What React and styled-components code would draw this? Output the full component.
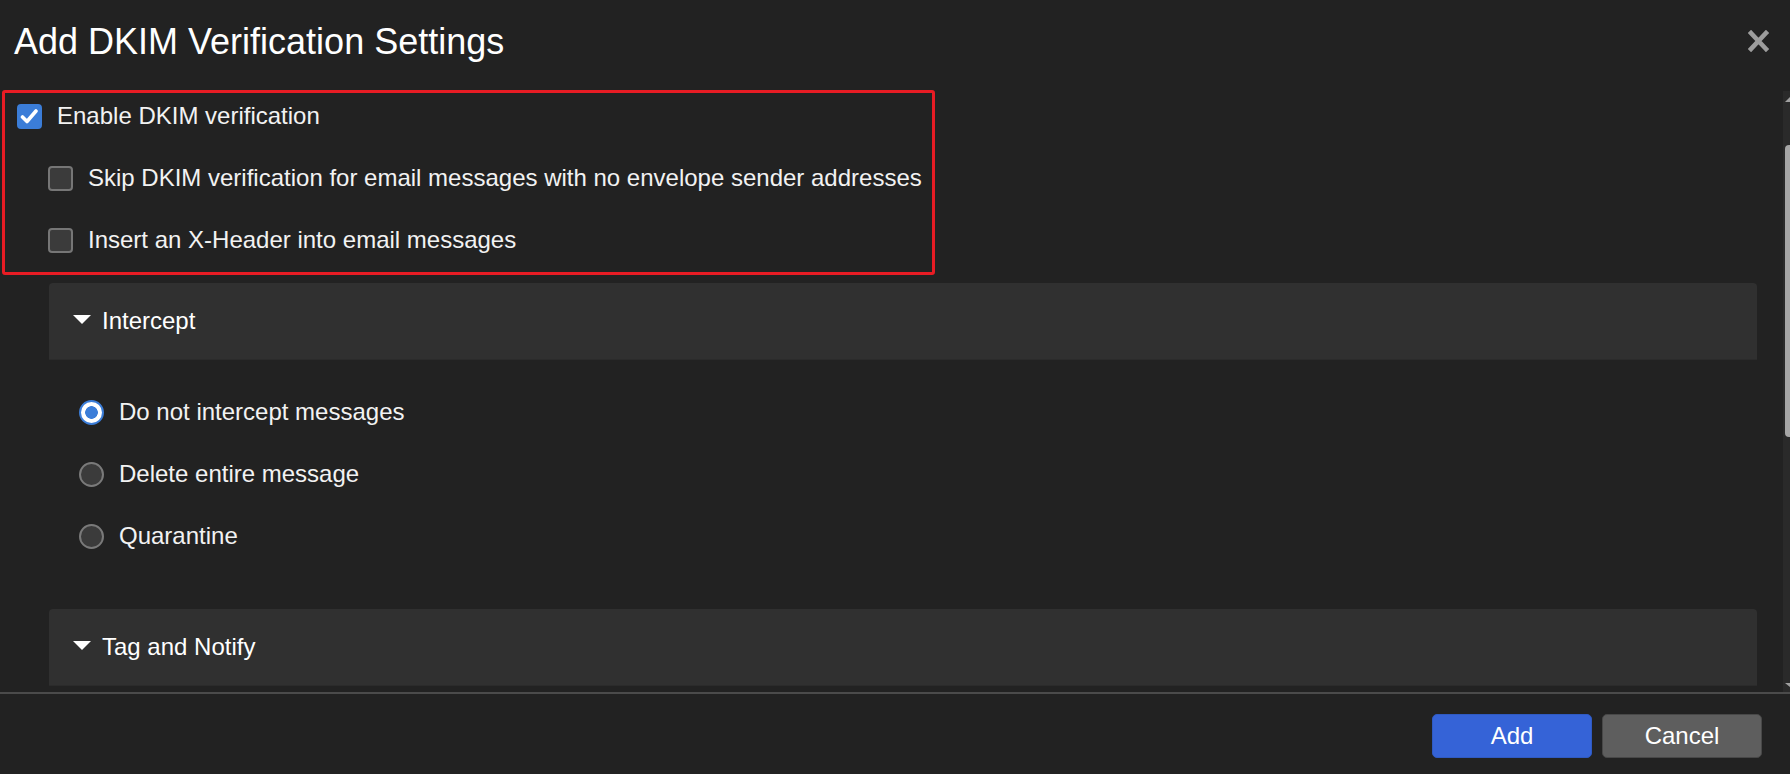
import React from "react";
import styled, { createGlobalStyle } from "styled-components";

const GlobalStyle = createGlobalStyle`
  html, body {
    margin: 0;
    padding: 0;
    background: #222222;
    overflow: hidden;
  }
  * { box-sizing: border-box; }
`;

const Dialog = styled.div`
  width: 1790px;
  height: 774px;
  display: flex;
  flex-direction: column;
  background: #222222;
  color: #f2f2f2;
  font-family: "Liberation Sans", Arial, sans-serif;
  font-size: 24px;
`;

const Header = styled.div`
  height: 90px;
  flex: none;
  display: flex;
  justify-content: space-between;
  align-items: flex-start;
  padding: 0 21px 0 14px;
`;

const Title = styled.h1`
  margin: 22px 0 0;
  font-size: 36px;
  line-height: 40px;
  font-weight: normal;
  color: #ffffff;
`;

const CloseButton = styled.button`
  margin-top: 30px;
  width: 21px;
  height: 22px;
  padding: 0;
  border: none;
  background: none;
  display: flex;
  align-items: center;
  justify-content: center;
  cursor: pointer;
`;

const Body = styled.div`
  height: 602px;
  flex: none;
  display: flex;
`;

const Content = styled.div`
  flex: 1;
  overflow: hidden;
  padding: 0 26px 0 2px;
`;

const Highlight = styled.div`
  width: 933px;
  border: 3px solid #e81c24;
  border-radius: 3px;
  padding: 3px 0 12px;
  display: flex;
  flex-direction: column;
  gap: 22px;
`;

const OptionRow = styled.label`
  height: 40px;
  display: flex;
  align-items: center;
  gap: 15px;
  padding-left: ${(p) => p.$indent}px;
  line-height: 28px;
  white-space: nowrap;
`;

const CheckBox = styled.span`
  width: 25px;
  height: 25px;
  flex: none;
  border-radius: 4px;
  display: flex;
  align-items: center;
  justify-content: center;
  background: ${(p) => (p.$checked ? "#3b7dd8" : "#3b3b3b")};
  border: 2px solid ${(p) => (p.$checked ? "#3b7dd8" : "#767676")};
`;

const Sections = styled.div`
  margin-left: 47px;
  margin-top: 8px;
  display: flex;
  flex-direction: column;
`;

const SectionHeader = styled.div`
  height: 77px;
  display: flex;
  align-items: center;
  gap: 11px;
  padding-left: 24px;
  background: #303030;
  border-radius: 4px 4px 0 0;
  border-bottom: 1px solid #2b2b2b;
  color: #ffffff;
`;

const Caret = styled.span`
  width: 0;
  height: 0;
  border-left: 9px solid transparent;
  border-right: 9px solid transparent;
  border-top: 9px solid #ffffff;
  margin-top: -4px;
`;

const SectionBody = styled.div`
  padding: 32px 0 53px 30px;
  display: flex;
  flex-direction: column;
  gap: 22px;
`;

const Radio = styled.span`
  width: 25px;
  height: 25px;
  flex: none;
  border-radius: 50%;
  border: 2px solid ${(p) => (p.$checked ? "#3b7dd8" : "#7a7a7a")};
  background: ${(p) =>
    p.$checked
      ? "radial-gradient(circle, #3b7dd8 0 6px, #ffffff 6.6px)"
      : "#3b3b3b"};
`;

const ScrollTrack = styled.div`
  width: 7px;
  flex: none;
  background: #2a2a2a;
  overflow: hidden;
  display: flex;
  flex-direction: column;
  padding-left: 2px;
  margin-top: 1px;
`;

const ArrowUp = styled.span`
  width: 0;
  height: 0;
  margin-top: 6px;
  border-left: 5px solid transparent;
  border-right: 5px solid transparent;
  border-bottom: 5px solid #a0a0a0;
`;

const Thumb = styled.span`
  width: 12px;
  height: 292px;
  margin-top: 43px;
  background: #a6a6a6;
  border-radius: 4px;
`;

const ArrowDown = styled.span`
  width: 0;
  height: 0;
  margin-top: auto;
  margin-bottom: 5px;
  border-left: 5px solid transparent;
  border-right: 5px solid transparent;
  border-top: 4px solid #a0a0a0;
`;

const Separator = styled.div`
  height: 2px;
  flex: none;
  background: #4b4b4b;
`;

const Footer = styled.div`
  flex: 1;
  display: flex;
  justify-content: flex-end;
  align-items: flex-start;
  gap: 10px;
  padding: 20px 28px 0 0;
`;

const Button = styled.button`
  width: 160px;
  height: 44px;
  border-radius: 5px;
  font-family: "Liberation Sans", Arial, sans-serif;
  font-size: 24px;
  color: #ffffff;
  cursor: pointer;
  background: ${(p) => (p.$primary ? "#3563d7" : "#5e5e5e")};
  border: 1px solid ${(p) => (p.$primary ? "#2f5ac2" : "#484848")};
`;

const Check = () => (
  <svg width="19" height="17" viewBox="0 0 19 17">
    <path d="M2.5 9 L7 13.5 L16 3" fill="none" stroke="#fff" strokeWidth="3.6" strokeLinecap="round" strokeLinejoin="round" />
  </svg>
);

const CloseIcon = () => (
  <svg width="21" height="22" viewBox="0 0 21 22">
    <path d="M3 3 L18 19 M18 3 L3 19" stroke="#9d9d9d" strokeWidth="4.6" strokeLinecap="square" />
  </svg>
);

const Section = ({ title, options }) => (
  <div>
    <SectionHeader>
      <Caret />
      <span>{title}</span>
    </SectionHeader>
    {options.length > 0 && (
      <SectionBody>
        {options.map((o, i) => (
          <OptionRow key={o} $indent={0}>
            <Radio $checked={i === 0} />
            {o}
          </OptionRow>
        ))}
      </SectionBody>
    )}
  </div>
);

export default function App() {
  return (
    <>
      <GlobalStyle />
      <Dialog>
        <Header>
          <Title>Add DKIM Verification Settings</Title>
          <CloseButton aria-label="Close">
            <CloseIcon />
          </CloseButton>
        </Header>
        <Body>
          <Content>
            <Highlight>
              <OptionRow $indent={12}>
                <CheckBox $checked>
                  <Check />
                </CheckBox>
                Enable DKIM verification
              </OptionRow>
              <OptionRow $indent={43}>
                <CheckBox />
                Skip DKIM verification for email messages with no envelope sender addresses
              </OptionRow>
              <OptionRow $indent={43}>
                <CheckBox />
                Insert an X-Header into email messages
              </OptionRow>
            </Highlight>
            <Sections>
              <Section
                title="Intercept"
                options={["Do not intercept messages", "Delete entire message", "Quarantine"]}
              />
              <Section title="Tag and Notify" options={[]} />
            </Sections>
          </Content>
          <ScrollTrack>
            <ArrowUp />
            <Thumb />
            <ArrowDown />
          </ScrollTrack>
        </Body>
        <Separator />
        <Footer>
          <Button $primary>Add</Button>
          <Button>Cancel</Button>
        </Footer>
      </Dialog>
    </>
  );
}
